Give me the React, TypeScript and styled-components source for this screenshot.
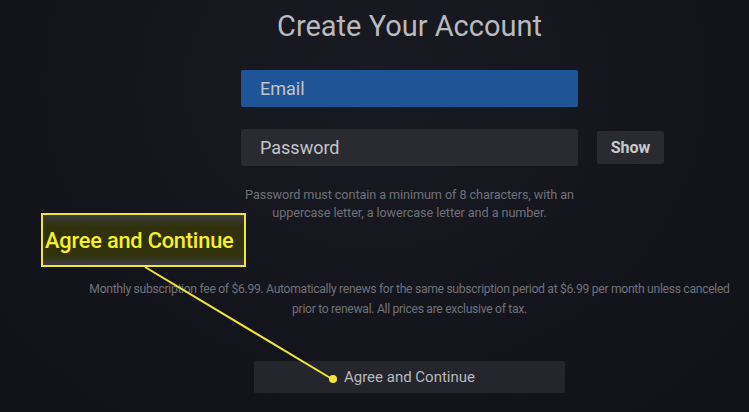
import React from 'react'
import styled, { createGlobalStyle } from 'styled-components'

const Global = createGlobalStyle`
html, body {
  margin: 0;
  padding: 0;
  background: #14151c;
}
body {
  font-family: Roboto, "Noto Sans", sans-serif;
}
`

const Page = styled.div`
position: relative;
width: 749px;
height: 412px;
overflow: hidden;
box-sizing: border-box;
padding: 9px 0 0 70px;
display: flex;
flex-direction: column;
align-items: center;
background: radial-gradient(ellipse at 50% 20%, #181922 0%, #14151c 60%, #111218 100%);
`

const Title = styled.h1`
margin: 0;
font-size: 29px;
line-height: 34px;
font-weight: 400;
color: #b9babe;
`

const Field = styled.div<{ $focused?: boolean }>`
box-sizing: border-box;
width: 337px;
height: 37px;
padding-left: 19px;
display: flex;
align-items: center;
font-size: 18px;
color: #c2c4c9;
border-radius: 2px;
background: ${p => (p.$focused ? '#1f5597' : '#2a2b31')};
`

const EmailRow = styled.div`
margin-top: 27px;
`

const PasswordRow = styled.div`
margin-top: 22px;
width: 679px;
display: grid;
grid-template-columns: 1fr 337px 1fr;
align-items: center;
`

const ShowButton = styled.button`
grid-column: 3;
justify-self: start;
margin-left: 19px;
width: 67px;
height: 33px;
border: none;
border-radius: 2px;
background: #2a2b31;
color: #c8c9cd;
font-family: Roboto, sans-serif;
font-weight: 700;
font-size: 16px;
padding: 0;
`

const Hint = styled.p`
margin: 20px 0 0;
text-align: center;
font-size: 12.7px;
line-height: 18px;
letter-spacing: -0.1px;
color: #6f7179;
`

const Terms = styled.p`
margin: 57px 0 0;
text-align: center;
font-size: 12.2px;
line-height: 20px;
letter-spacing: -0.32px;
color: #6f7179;
`

const AgreeButton = styled.button`
margin-top: 42px;
width: 311px;
height: 32px;
border: none;
border-radius: 2px;
background: #25262d;
color: #b6b8be;
font-family: Roboto, sans-serif;
font-size: 15px;
padding: 0;
`

const Callout = styled.div`
position: absolute;
left: 41px;
top: 213px;
width: 205px;
height: 54px;
box-sizing: border-box;
border: 2px solid #f2e53a;
background: linear-gradient(180deg, #3a3b40 0%, #30310c 22%, #31320a 80%, #3a3b42 100%);
display: flex;
align-items: center;
padding-left: 2px;
font-size: 21.8px;
font-weight: 500;
letter-spacing: -0.2px;
color: #f6f02a;
white-space: nowrap;
`

const Pointer = styled.svg`
position: absolute;
left: 0;
top: 0;
pointer-events: none;
`

export default function App() {
  return (
    <>
      <Global />
      <Page>
        <Title>Create Your Account</Title>
        <EmailRow>
          <Field $focused>Email</Field>
        </EmailRow>
        <PasswordRow>
          <span />
          <Field>Password</Field>
          <ShowButton>Show</ShowButton>
        </PasswordRow>
        <Hint>
          Password must contain a minimum of 8 characters, with an
          <br />
          uppercase letter, a lowercase letter and a number.
        </Hint>
        <Terms>
          Monthly subscription fee of $6.99. Automatically renews for the same subscription period at $6.99 per month unless canceled
          <br />
          prior to renewal. All prices are exclusive of tax.
        </Terms>
        <AgreeButton>Agree and Continue</AgreeButton>
        <Callout>Agree and Continue</Callout>
        <Pointer width="749" height="412">
          <line x1="145" y1="267" x2="332" y2="379" stroke="#f2e53a" strokeWidth="2" />
          <circle cx="333" cy="379" r="4" fill="#f2e53a" />
        </Pointer>
      </Page>
    </>
  )
}
